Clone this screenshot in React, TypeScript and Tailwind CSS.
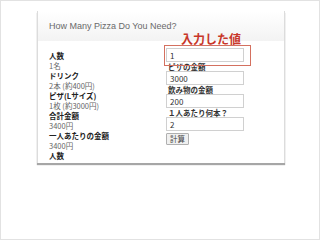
const jp = { fontFamily: '"Noto Sans CJK JP", "Liberation Sans", sans-serif' };

const summary: [string, string][] = [
  ['人数', '1名'],
  ['ドリンク', '2本 (約400円)'],
  ['ピザ(Lサイズ)', '1枚 (約3000円)'],
  ['合計金額', '3400円'],
  ['一人あたりの金額', '3400円'],
];

const fields: [string, string][] = [
  ['', '1'],
  ['ピザの金額', '3000'],
  ['飲み物の金額', '200'],
  ['１人あたり何本？', '2'],
];

export default function App() {
  return (
    <div className="w-[320px] h-[240px] bg-white border border-[#e2e2e2] overflow-hidden" style={jp}>
      {/* Card */}
      <div className="relative ml-[36px] mt-[10px] w-[248px] border-x border-[#dcdcdc] bg-white shadow-[0_2px_1px_rgba(0,0,0,0.35)]">
        {/* Header */}
        <div className="h-[30px] pl-[11px] pt-[10px] bg-gradient-to-b from-white to-[#f3f3f3] text-[9px] leading-[11px] text-[#6a6a6a]" style={{ fontFamily: '"Liberation Sans", Arial, sans-serif' }}>
          How Many Pizza Do You Need?
        </div>

        {/* Body */}
        <div className="flex pt-[7px] pb-[2px]">
          <div className="w-[128px] pl-[11px] pt-[3px] text-[7.5px] leading-[10px]">
            {summary.map(([label, value]) => (
              <div key={label}>
                <div className="font-bold text-[#222]">{label}</div>
                <div className="text-[#666]">{value}</div>
              </div>
            ))}
            <div className="font-bold text-[#222]">人数</div>
          </div>

          <div className="flex flex-col text-[7.5px] leading-[9px]">
            {fields.map(([label, value], i) => (
              <div key={i}>
                {label && <div className="pl-[2px] font-bold text-[#333]">{label}</div>}
                <div className="w-[78px] h-[14px] border border-[#d0d0d0] bg-white pl-[3px] pt-[2px] text-[8px] leading-[9px] text-[#333]">{value}</div>
              </div>
            ))}
            <button className="mt-[2px] w-[23px] h-[12px] border border-[#b0b0b0] rounded-[1px] bg-[#f0f0f0] text-[7.5px] leading-[10px] text-[#444]">
              計算
            </button>
          </div>
        </div>

        {/* Annotation */}
        <div className="absolute left-[143px] top-[21px] text-[12px] leading-[13px] font-bold text-[#c8372a]">
          入力した値
        </div>
        <div className="absolute left-[126px] top-[34px] w-[87px] h-[21px] border-[1.5px] border-[#d4705f]" />
      </div>
    </div>
  );
}
